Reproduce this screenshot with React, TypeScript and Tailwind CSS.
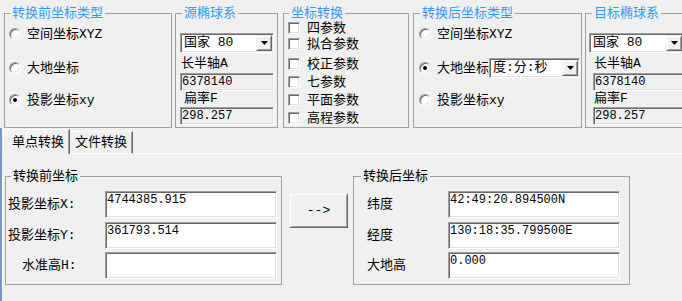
import type { ReactNode } from "react";

const sunken =
  "border border-t-[#a0a0a0] border-l-[#a0a0a0] border-r-white border-b-white shadow-[inset_1px_1px_0_#696969,inset_-1px_-1px_0_#e3e3e3]";
const raised =
  "border border-t-[#f0f0f0] border-l-[#f0f0f0] border-r-[#696969] border-b-[#696969] shadow-[inset_1px_1px_0_#fff,inset_-1px_-1px_0_#a0a0a0]";

function Group({
  title,
  blue,
  className,
  legendClass,
  children,
}: {
  title: string;
  blue?: boolean;
  className: string;
  legendClass: string;
  children: ReactNode;
}) {
  return (
    <fieldset className={`shrink-0 border border-[#a0a0a0] ${className}`}>
      <legend className={`px-[2px] leading-[15px] ${legendClass} ${blue ? "text-[#3399ff]" : "text-black"}`}>
        {title}
      </legend>
      {children}
    </fieldset>
  );
}

function Radio({ checked }: { checked?: boolean }) {
  return (
    <span className={`w-[12px] h-[12px] shrink-0 rounded-full bg-white flex items-center justify-center ${sunken}`}>
      {checked && <span className="w-[4px] h-[4px] rounded-full bg-black" />}
    </span>
  );
}

function Check() {
  return <span className={`w-[12px] h-[12px] shrink-0 bg-white ${sunken}`} />;
}

function Combo({ value, className }: { value: string; className: string }) {
  return (
    <div className={`flex h-[20px] shrink-0 bg-white ${sunken} ${className}`}>
      <span className="flex-1 pl-[3px] leading-[18px] whitespace-nowrap overflow-hidden">{value}</span>
      <span className={`w-[16px] h-[16px] mt-[1px] mr-[1px] shrink-0 bg-[#f0f0f0] flex items-center justify-center ${raised}`}>
        <svg width="7" height="4" viewBox="0 0 7 4">
          <polygon points="0,0 7,0 3.5,4" fill="#000" />
        </svg>
      </span>
    </div>
  );
}

function ReadOnly({ value, className }: { value: string; className: string }) {
  return (
    <div className={`h-[18px] w-[94px] shrink-0 bg-[#f0f0f0] pl-[1px] text-[12px] leading-[16px] ${sunken} ${className}`}>
      {value}
    </div>
  );
}

function Edit({ value }: { value: string }) {
  return (
    <div className={`h-[27px] w-[172px] shrink-0 bg-white pl-[1px] pt-[1px] text-[12px] leading-[14px] ${sunken}`}>
      {value}
    </div>
  );
}

const checks: [string, string][] = [
  ["四参数", "mt-[1px]"],
  ["拟合参数", "mt-[4px]"],
  ["校正参数", "mt-[8px]"],
  ["七参数", "mt-[6px]"],
  ["平面参数", "mt-[6px]"],
  ["高程参数", "mt-[6px]"],
];

export default function App() {
  return (
    <div className="w-[682px] h-[301px] overflow-hidden bg-[#f0f0f0] text-black text-[13px] leading-[15px] font-['Liberation_Mono','Noto_Sans_CJK_SC',monospace]">
      {/* top option groups */}
      <div className="flex pt-[6px]">
        <Group title="转换前坐标类型" blue className="ml-[4px] w-[168px] h-[122px]" legendClass="ml-[5px]">
          <div className="flex flex-col pl-[4px]">
            <div className="mt-[5px] h-[16px] flex items-center gap-[6px]">
              <Radio />
              空间坐标XYZ
            </div>
            <div className="mt-[18px] h-[16px] flex items-center gap-[6px]">
              <Radio />
              大地坐标
            </div>
            <div className="mt-[16px] h-[16px] flex items-center gap-[6px]">
              <Radio checked />
              投影坐标xy
            </div>
          </div>
        </Group>

        <Group title="源椭球系" blue className="ml-[3px] w-[103px] h-[122px]" legendClass="ml-[6px]">
          <div className="flex flex-col pl-[4px]">
            <Combo value="国家 80" className="mt-[12px] w-[94px]" />
            <div className="mt-[3px] pl-[1px]">长半轴A</div>
            <ReadOnly value="6378140" className="mt-[2px]" />
            <div className="pl-[4px]">扁率F</div>
            <ReadOnly value="298.257" className="mt-[1px]" />
          </div>
        </Group>

        <Group title="坐标转换" blue className="ml-[5px] w-[126px] h-[122px]" legendClass="ml-[5px]">
          <div className="flex flex-col pl-[4px]">
            {checks.map(([label, mt]) => (
              <div key={label} className={`${mt} h-[12px] flex items-center gap-[7px]`}>
                <Check />
                {label}
              </div>
            ))}
          </div>
        </Group>

        <Group title="转换后坐标类型" blue className="ml-[4px] w-[169px] h-[122px]" legendClass="ml-[6px]">
          <div className="flex flex-col pl-[5px]">
            <div className="mt-[5px] h-[16px] flex items-center gap-[6px]">
              <Radio />
              空间坐标XYZ
            </div>
            <div className="mt-[16px] h-[20px] flex items-center">
              <Radio checked />
              <span className="ml-[6px]">大地坐标</span>
              <Combo value="度:分:秒" className="w-[91px]" />
            </div>
            <div className="mt-[14px] h-[16px] flex items-center gap-[6px]">
              <Radio />
              投影坐标xy
            </div>
          </div>
        </Group>

        <Group title="目标椭球系" blue className="ml-[3px] w-[103px] h-[122px]" legendClass="ml-[6px]">
          <div className="flex flex-col pl-[3px]">
            <Combo value="国家 80" className="mt-[12px] w-[95px]" />
            <div className="mt-[3px] pl-[5px]">长半轴A</div>
            <ReadOnly value="6378140" className="mt-[2px] ml-[4px]" />
            <div className="pl-[5px]">扁率F</div>
            <ReadOnly value="298.257" className="mt-[1px] ml-[4px]" />
          </div>
        </Group>
      </div>

      {/* tab control */}
      <div className="h-[173px] border-l-2 border-[#7a96c8] flex flex-col">
        <div className="h-[26px] flex items-end shrink-0">
          <div className="ml-[1px] w-[67px] h-[25px] border-t border-l border-white border-r border-r-[#696969] shadow-[inset_-1px_0_0_#a0a0a0] pl-[8px] pt-[5px] whitespace-nowrap">
            单点转换
          </div>
          <div className="w-[63px] h-[23px] border-t border-b border-white border-r border-r-[#696969] shadow-[inset_-1px_0_0_#a0a0a0] pl-[5px] pt-[3px] whitespace-nowrap">
            文件转换
          </div>
          <div className="flex-1 h-[1px] bg-white" />
        </div>

        <div className="flex-1 border-l border-white flex items-start pt-[15px]">
          <Group title="转换前坐标" className="ml-[2px] w-[277px] h-[116px]" legendClass="ml-[5px]">
            <div className="flex flex-col pl-[2px] pt-[7px]">
              <div className="h-[27px] flex items-center">
                <span className="w-[97px]">投影坐标X:</span>
                <Edit value="4744385.915" />
              </div>
              <div className="mt-[4px] h-[27px] flex items-center">
                <span className="w-[97px]">投影坐标Y:</span>
                <Edit value="361793.514" />
              </div>
              <div className="mt-[3px] h-[27px] flex items-center">
                <span className="w-[97px] pl-[14px]">水准高H:</span>
                <Edit value="" />
              </div>
            </div>
          </Group>

          <button className={`ml-[7px] mt-[24px] w-[59px] h-[35px] shrink-0 bg-[#f0f0f0] text-[13px] ${raised}`}>
            --&gt;
          </button>

          <Group title="转换后坐标" className="ml-[5px] w-[277px] h-[116px]" legendClass="ml-[7px]">
            <div className="flex flex-col pt-[7px]">
              <div className="h-[27px] flex items-center">
                <span className="w-[94px] pl-[13px]">纬度</span>
                <Edit value="42:49:20.894500N" />
              </div>
              <div className="mt-[4px] h-[27px] flex items-center">
                <span className="w-[94px] pl-[13px]">经度</span>
                <Edit value="130:18:35.799500E" />
              </div>
              <div className="mt-[3px] h-[27px] flex items-center">
                <span className="w-[94px] pl-[13px]">大地高</span>
                <Edit value="0.000" />
              </div>
            </div>
          </Group>
        </div>
      </div>
    </div>
  );
}
